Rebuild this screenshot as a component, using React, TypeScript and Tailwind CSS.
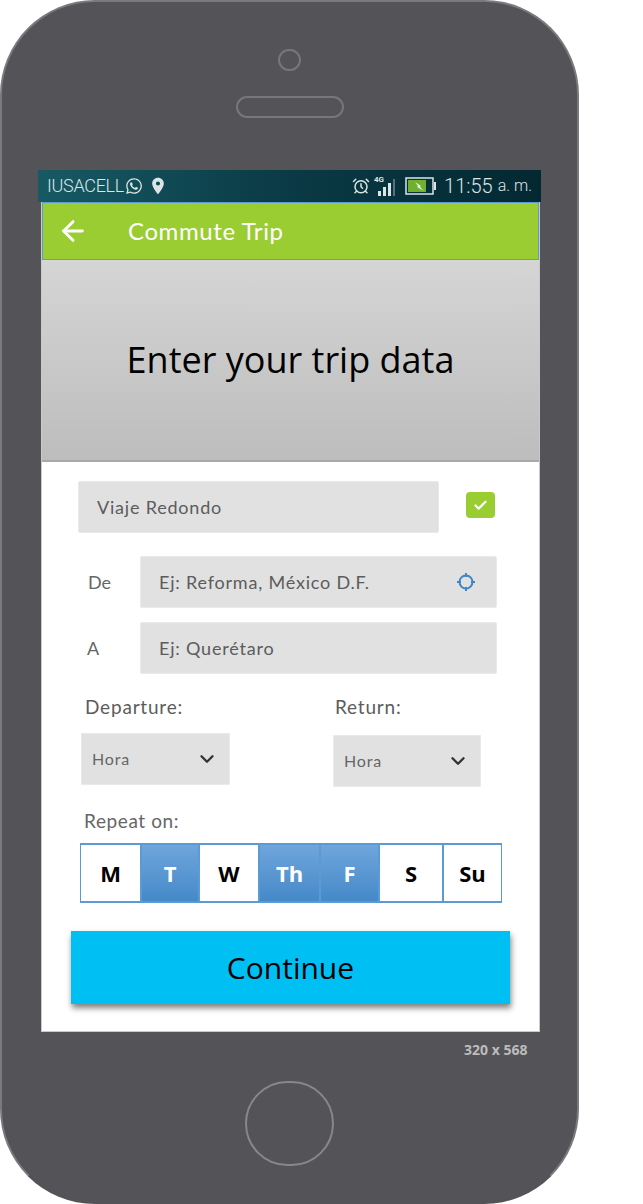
import { AlarmClock, ArrowLeft, Check, ChevronDown } from 'lucide-react';
import { FaWhatsapp } from 'react-icons/fa';
import { MdLocationOn } from 'react-icons/md';

const DAYS = [
  { label: 'M', on: false, width: 'w-[61px]' },
  { label: 'T', on: true, width: 'w-[58px]' },
  { label: 'W', on: false, width: 'w-[60px]' },
  { label: 'Th', on: true, width: 'w-[61px]' },
  { label: 'F', on: true, width: 'w-[59px]' },
  { label: 'S', on: false, width: 'w-[64px]' },
  { label: 'Su', on: false, width: 'w-[59px]' },
];

function StatusBar() {
  return (
    <div className="ml-[38px] flex h-[32px] w-[503px] items-center bg-gradient-to-r from-[#175a64] via-[#0a3a45] to-[#042832] pl-[9px] pr-[9px] font-['Roboto',sans-serif] text-[#dbe5e6]">
      <span className="text-[18px] font-light leading-none tracking-[-0.3px]">IUSACELL</span>
      <FaWhatsapp className="ml-[1px]" size={18} />
      <MdLocationOn className="ml-[5px]" size={20} />
      <div className="ml-auto flex items-center">
        <AlarmClock size={18} strokeWidth={2} />
        <svg width="24" height="24" viewBox="0 0 24 24" className="ml-[2px]">
          <text x="2" y="8" fontSize="8" fontWeight="700" fill="#dbe5e6" fontFamily="Roboto, sans-serif">4G</text>
          <rect x="6" y="17" width="3" height="5" fill="#dbe5e6" />
          <rect x="11" y="13" width="3" height="9" fill="#dbe5e6" />
          <rect x="16" y="9" width="3" height="13" fill="#dbe5e6" />
          <rect x="21" y="5" width="2" height="17" fill="#55727a" />
        </svg>
        <svg width="31" height="20" viewBox="0 0 31 20" className="ml-[9px]">
          <rect x="1" y="2" width="27" height="16" fill="none" stroke="#dbe5e6" strokeWidth="1.5" />
          <rect x="3" y="4" width="18" height="12" fill="#6fb02e" />
          <rect x="29" y="6" width="2" height="8" fill="#dbe5e6" />
          <path d="M10 6l6 4-1 1 4 4-7-4 1-1z" fill="#e8f2de" />
        </svg>
        <span className="ml-[8px] text-[20px] font-light leading-none">11:55</span>
        <span className="ml-[5px] text-[16px] font-light leading-none">a. m.</span>
      </div>
    </div>
  );
}

function Field({ text, className, icon }: { text: string; className: string; icon?: boolean }) {
  return (
    <div className={`flex h-[52px] items-center rounded-[2px] border border-[#eaeaea] bg-[#e1e1e1] font-['Lato',sans-serif] text-[18px] tracking-[0.8px] text-[#5c5c5c] ${className}`}>
      <span>{text}</span>
      {icon && (
        <svg width="20" height="20" viewBox="0 0 20 20" className="ml-auto mr-[20px]" fill="none" stroke="#3f86c6" strokeWidth="2">
          <circle cx="10" cy="10" r="6.5" />
          <path d="M10 1v4M10 15v4M1 10h4M15 10h4" />
        </svg>
      )}
    </div>
  );
}

function Select({ className }: { className: string }) {
  return (
    <div className={`flex h-[52px] items-center border border-[#eaeaea] bg-[#e1e1e1] pl-[10px] pr-[11px] font-['Lato',sans-serif] text-[16px] tracking-[0.8px] text-[#666666] ${className}`}>
      <span>Hora</span>
      <ChevronDown className="ml-auto text-[#333333]" size={22} strokeWidth={2.6} />
    </div>
  );
}

function DayRow() {
  return (
    <div className="ml-[38px] mt-[10px] flex h-[60px] w-[422px] border-y-2 border-[#5b9bd5] font-['Open_Sans',sans-serif] text-[22px] font-bold">
      {DAYS.map((d) => (
        <div
          key={d.label}
          className={`flex items-center justify-center border-x border-[#5b9bd5] ${d.width} ${
            d.on ? 'bg-gradient-to-b from-[#6fa5dc] to-[#4589c9] text-white' : 'bg-white text-black'
          }`}
        >
          {d.label}
        </div>
      ))}
    </div>
  );
}

export default function App() {
  return (
    <div className="h-[1204px] w-[643px] bg-white">
      <div className="flex h-[1204px] w-[579px] flex-col rounded-[95px] border-2 border-[#7a797d] bg-[#545358] [border-bottom-color:#545358]">
        {/* camera + speaker */}
        <div className="mx-auto mt-[47px] h-[22px] w-[23px] rounded-full border-2 border-[#77767a]" />
        <div className="mx-auto mt-[25px] h-[22px] w-[108px] rounded-full border-2 border-[#77767a]" />
        <div className="mt-[52px] -ml-[2px]">
          <StatusBar />
        </div>

        <div className="ml-[39px] flex h-[830px] w-[499px] flex-col border-x border-b border-[#c9c9c9] bg-white">
          <div className="flex h-[58px] shrink-0 items-center border border-[#5b9bd5] bg-[#9acd32] font-['Lato',sans-serif] text-[24px] tracking-[0.6px] text-white">
            <ArrowLeft className="ml-[14px]" size={32} strokeWidth={2.2} />
            <span className="ml-[39px]">Commute Trip</span>
          </div>
          <div className="flex h-[202px] shrink-0 items-center justify-center border-b-2 border-[#a9a9a9] bg-gradient-to-b from-[#d5d5d5] to-[#bdbdbd] font-['Open_Sans',sans-serif] text-[36px] text-black">
            Enter your trip data
          </div>

          <div className="mt-[19px] flex items-start">
            <Field text="Viaje Redondo" className="ml-[36px] w-[361px] pl-[18px]" />
            <div className="ml-[27px] mt-[11px] flex h-[26px] w-[29px] items-center justify-center rounded-[4px] bg-[#9acd32] text-white">
              <Check size={15} strokeWidth={3.5} />
            </div>
          </div>

          <div className="mt-[23px] flex items-center font-['Lato',sans-serif] text-[18px] text-[#666666]">
            <span className="ml-[46px] w-[52px]">De</span>
            <Field text="Ej: Reforma, México D.F." className="w-[357px] pl-[18px]" icon />
          </div>
          <div className="mt-[14px] flex items-center font-['Lato',sans-serif] text-[18px] text-[#666666]">
            <span className="ml-[45px] w-[53px]">A</span>
            <Field text="Ej: Querétaro" className="w-[357px] pl-[18px]" />
          </div>

          <div className="mt-[21px] flex font-['Lato',sans-serif] text-[19px] leading-[24px] tracking-[0.8px] text-[#5c5c5c]">
            <span className="ml-[43px] w-[250px]">Departure:</span>
            <span>Return:</span>
          </div>
          <div className="mt-[14px] flex items-start">
            <Select className="ml-[39px] w-[149px]" />
            <Select className="ml-[103px] mt-[2px] w-[148px]" />
          </div>

          <div className="ml-[42px] mt-[22px] font-['Lato',sans-serif] text-[19px] leading-[24px] tracking-[0.6px] text-[#666666]">
            Repeat on:
          </div>
          <DayRow />

          <div className="ml-[29px] mt-[28px] flex h-[73px] w-[439px] items-center justify-center bg-[#00bff3] font-['Open_Sans',sans-serif] text-[30px] text-black shadow-[1px_4px_6px_rgba(0,0,0,0.5)]">
            Continue
          </div>
        </div>

        <div className="ml-[462px] mt-[9px] font-['Open_Sans',sans-serif] text-[14px] font-bold leading-[18px] text-[#bdbcbc]">
          320 x 568
        </div>
        <div className="mx-auto mt-[22px] h-[85px] w-[89px] rounded-full border-2 border-[#88878a]" />
      </div>
    </div>
  );
}
